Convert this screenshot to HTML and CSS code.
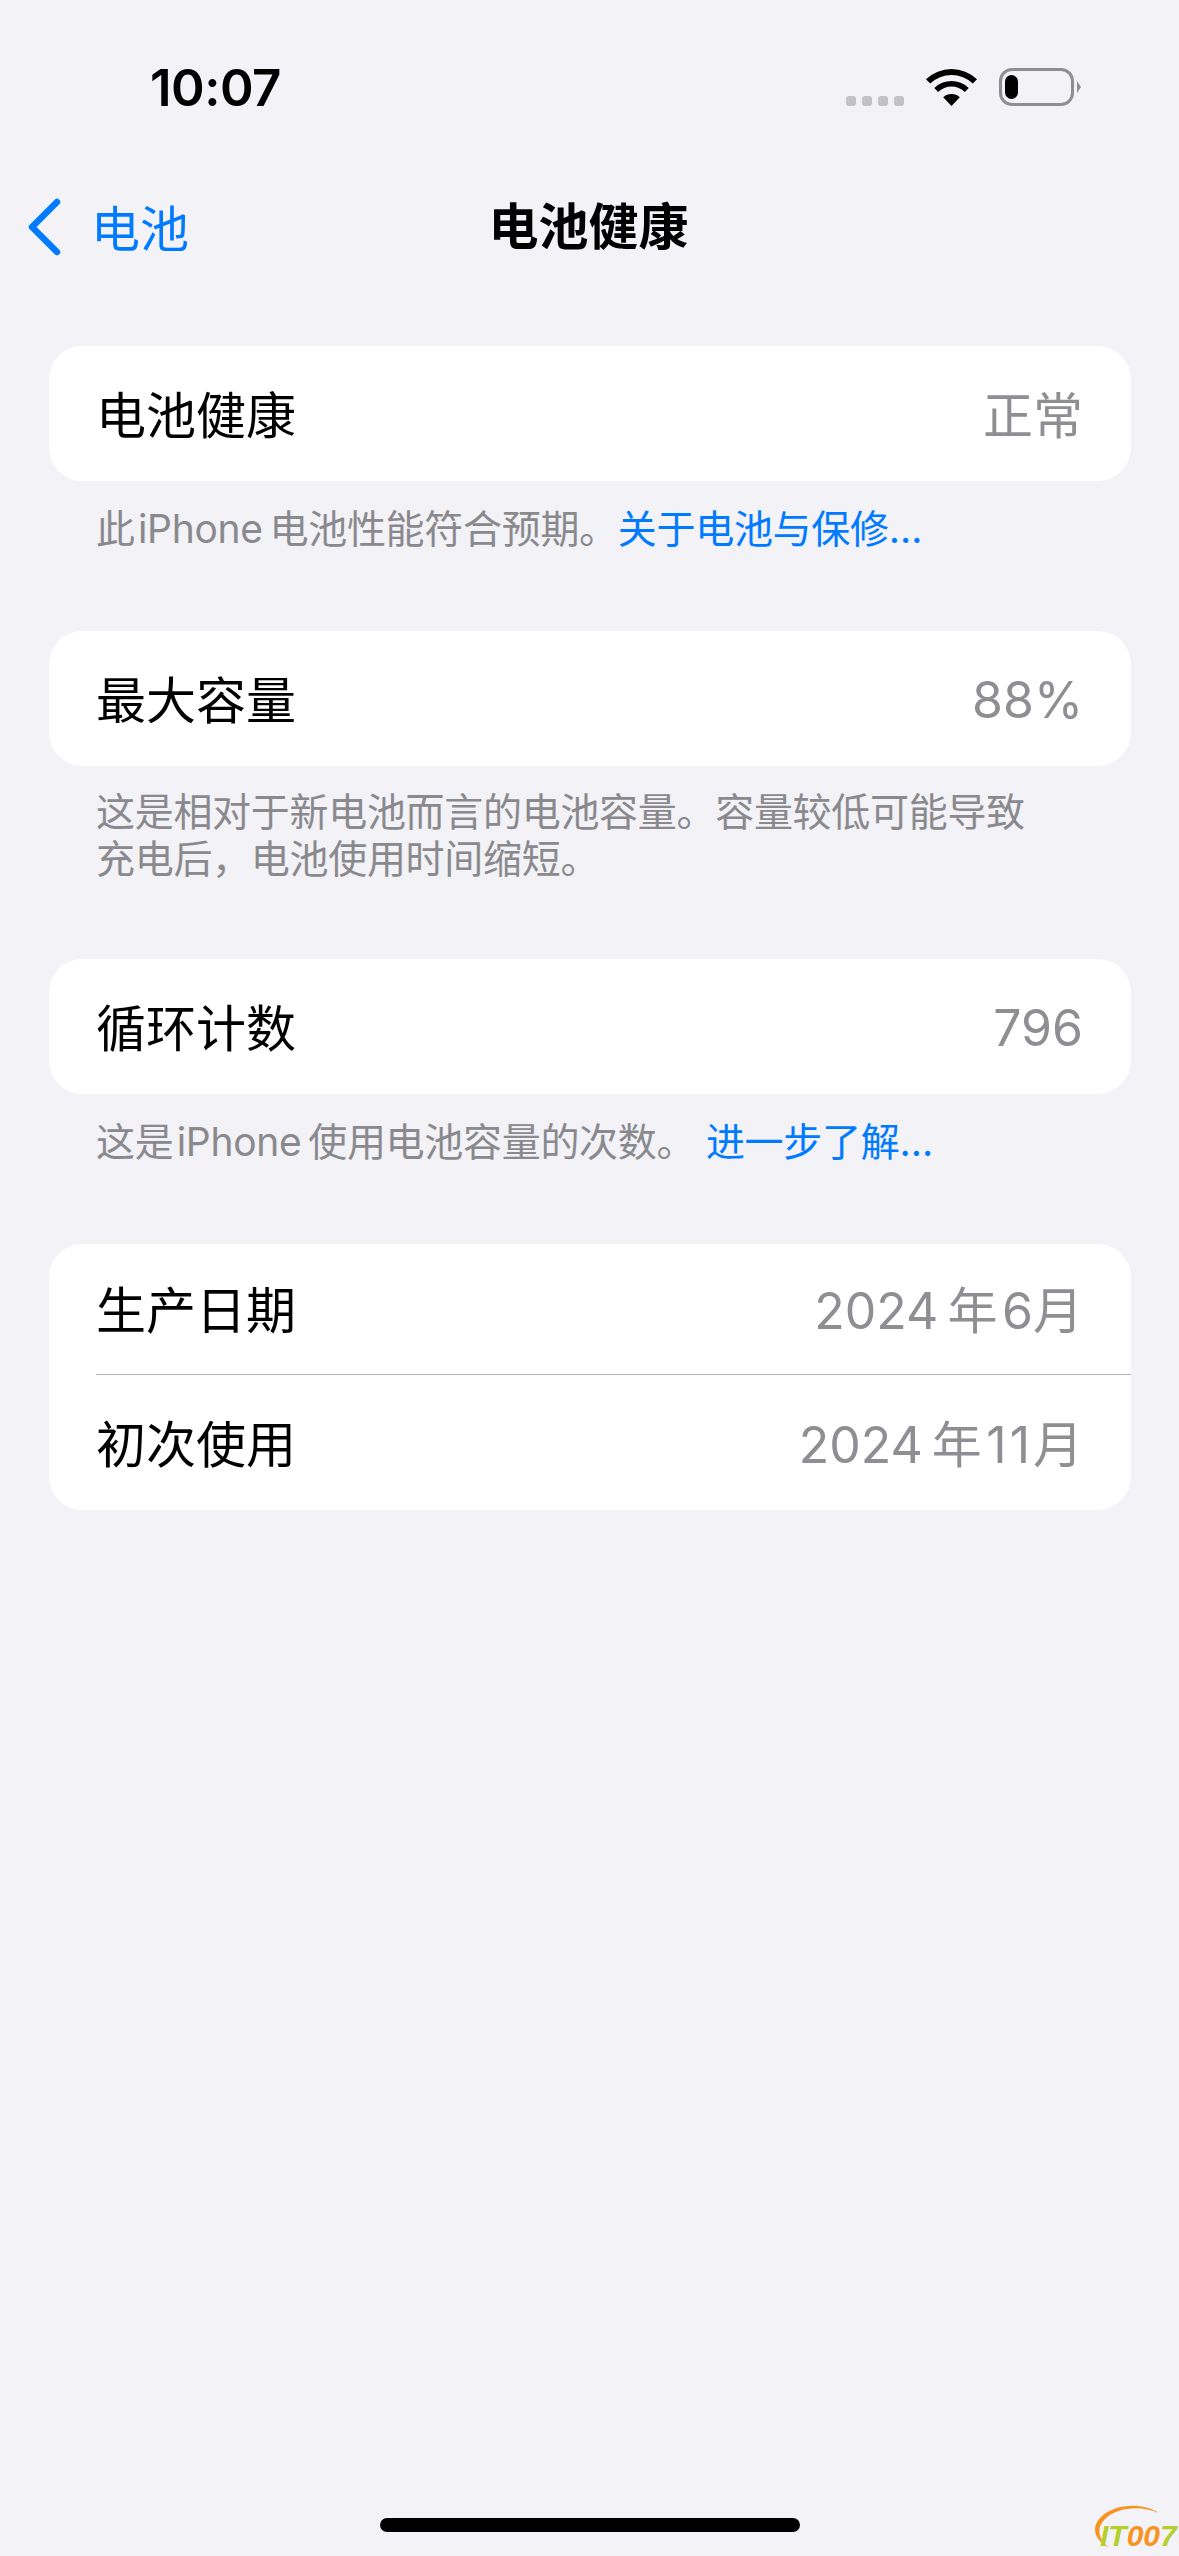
FILE: index.html
```html
<!DOCTYPE html>
<html lang="zh-CN">
<head>
    <meta charset="UTF-8">
    <meta name="viewport" content="width=device-width, initial-scale=1.0">
    <title>电池健康</title>
    <link rel="stylesheet" href="styles.css">
</head>
<body>
    <div class="status-bar">
        <span class="time">10:07</span>
        <div class="status-icons">
            <div class="signal"><i></i><i></i><i></i><i></i></div>
            <svg class="wifi" width="51" height="37" viewBox="0 0 51 37">
                <path d="M0 10.2A37 37 0 0 1 51 10.2L46.8 14.5A31 31 0 0 0 4.2 14.5Z"/>
                <path d="M8.3 18.9A25 25 0 0 1 42.7 18.9L38.9 22.9A19.5 19.5 0 0 0 12.1 22.9Z"/>
                <path d="M17.2 28.3A12 12 0 0 1 33.8 28.3L25.5 37Z"/>
            </svg>
            <div class="battery"><div class="battery-level"></div></div>
            <div class="battery-cap"></div>
        </div>
    </div>

    <div class="nav-bar">
        <a class="back">
            <svg width="36" height="58" viewBox="0 0 36 58">
                <path d="M31 4L6 29L31 54" fill="none" stroke="#007aff" stroke-width="6.5" stroke-linecap="round" stroke-linejoin="round"/>
            </svg>
            <span>电池</span>
        </a>
        <h1>电池健康</h1>
    </div>

    <main class="content">
        <section class="group">
            <div class="card">
                <div class="row"><span>电池健康</span><span class="value">正常</span></div>
            </div>
            <p class="note">此&#8202;iPhone&#8201;电池性能符合预期。<a>关于电池与保修…</a></p>
        </section>

        <section class="group">
            <div class="card">
                <div class="row"><span>最大容量</span><span class="value value-num">88%</span></div>
            </div>
            <p class="note note-tall">这是相对于新电池而言的电池容量。容量较低可能导致<br>充电后，电池使用时间缩短。</p>
        </section>

        <section class="group">
            <div class="card">
                <div class="row"><span>循环计数</span><span class="value value-num">796</span></div>
            </div>
            <p class="note">这是&#8202;iPhone&#8201;使用电池容量的次数。 <a>进一步了解…</a></p>
        </section>

        <section class="group">
            <div class="card">
                <div class="row row-top"><span>生产日期</span><span class="value">2024&#8201;年&#8202;6月</span></div>
                <div class="row row-bottom"><span>初次使用</span><span class="value">2024&#8201;年&#8202;<span class="month-wide">11</span>月</span></div>
            </div>
        </section>
    </main>

    <div class="home-indicator"></div>

    <div class="watermark">
        <svg width="76" height="50" viewBox="0 0 76 50">
            <path d="M22 46C8 38 3 26 14 15C28 2 54 0 72 11C54 3 30 5 18 17C9 26 11 37 22 46Z" fill="#f7931e"/>
        </svg>
        <span class="wm-text">IT<b>00</b>7</span>
    </div>
</body>
</html>
```

FILE: styles.css
```css
* {
    box-sizing: border-box;
}
html, body {
    height: 100%;
}
body {
    position: relative;
    display: flex;
    flex-direction: column;
    margin: 0;
    height: 2556px;
    overflow: hidden;
    background-color: #f2f2f7;
    color: #000;
    font-family: Inter, "Noto Sans CJK SC", sans-serif;
}
.status-bar {
    display: flex;
    justify-content: space-between;
    align-items: flex-start;
    height: 172px;
    padding: 58px 98px 0 150px;
}
.time {
    font-size: 51px;
    font-weight: 600;
    line-height: 60px;
    letter-spacing: -0.5px;
}
.status-icons {
    display: flex;
    align-items: flex-start;
    padding-top: 10px;
}
.signal {
    display: flex;
    gap: 6px;
    margin: 28px 22px 0 0;
}
.signal i {
    width: 10px;
    height: 10px;
    border-radius: 3px;
    background-color: #c2c2c7;
}
.wifi {
    display: block;
    margin-top: 1px;
    margin-right: 22px;
    fill: #000;
}
.battery {
    width: 75px;
    height: 38px;
    padding: 4px 3px;
    border: 3px solid #8e8e93;
    border-radius: 13px;
}
.battery-level {
    width: 13px;
    height: 100%;
    border-radius: 7px;
    background-color: #000;
}
.battery-cap {
    width: 0;
    height: 0;
    margin: 13px 0 0 3px;
    border-top: 6px solid transparent;
    border-bottom: 6px solid transparent;
    border-left: 4px solid #8e8e93;
}
.nav-bar {
    position: relative;
    display: flex;
    justify-content: center;
    align-items: center;
    height: 110px;
    padding-right: 2px;
}
.nav-bar h1 {
    margin: 0;
    font-size: 50px;
    font-weight: 700;
    line-height: 60px;
}
.back {
    position: absolute;
    left: 26px;
    top: 0;
    display: flex;
    align-items: center;
    gap: 29px;
    height: 100%;
    color: #007aff;
    font-size: 49px;
}
.back svg {
    display: block;
}
.back span {
    margin-top: -4px;
}
.content {
    flex: 1;
    padding: 64px 48px 0 49px;
}
.group {
    margin-bottom: 79px;
}
.card {
    overflow: hidden;
    border-radius: 33px;
    background-color: #fff;
}
.row {
    display: flex;
    justify-content: space-between;
    align-items: center;
    height: 135px;
    margin-left: 47px;
    padding-right: 48px;
    padding-bottom: 3px;
    font-size: 50px;
}
.row-top {
    height: 130px;
    padding-bottom: 5px;
}
.row-bottom {
    height: 136px;
    padding-bottom: 4px;
    border-top: 1px solid #b4b4b8;
}
.value {
    color: #8e8e93;
}
.value-num {
    margin-top: 6px;
}
.month-wide {
    letter-spacing: 3px;
}
.note {
    margin: 24px 0 0;
    padding: 0 47px;
    color: #8a8a8e;
    font-size: 39px;
    line-height: 47px;
    letter-spacing: -0.3px;
}
.note-tall {
    margin: 22px 0 -2px;
}
.note a {
    color: #007aff;
}
.home-indicator {
    width: 420px;
    height: 14px;
    margin: 0 auto 24px;
    border-radius: 7px;
    background-color: #000;
}
.watermark {
    position: absolute;
    left: 1087px;
    top: 2502px;
}
.watermark svg {
    display: block;
}
.wm-text {
    position: absolute;
    left: 13px;
    top: 17px;
    color: #b5cf2d;
    font-family: "Liberation Sans", sans-serif;
    font-size: 30px;
    font-style: italic;
    font-weight: 700;
    line-height: 34px;
    white-space: nowrap;
}
.wm-text b {
    color: #f7931e;
}
```
